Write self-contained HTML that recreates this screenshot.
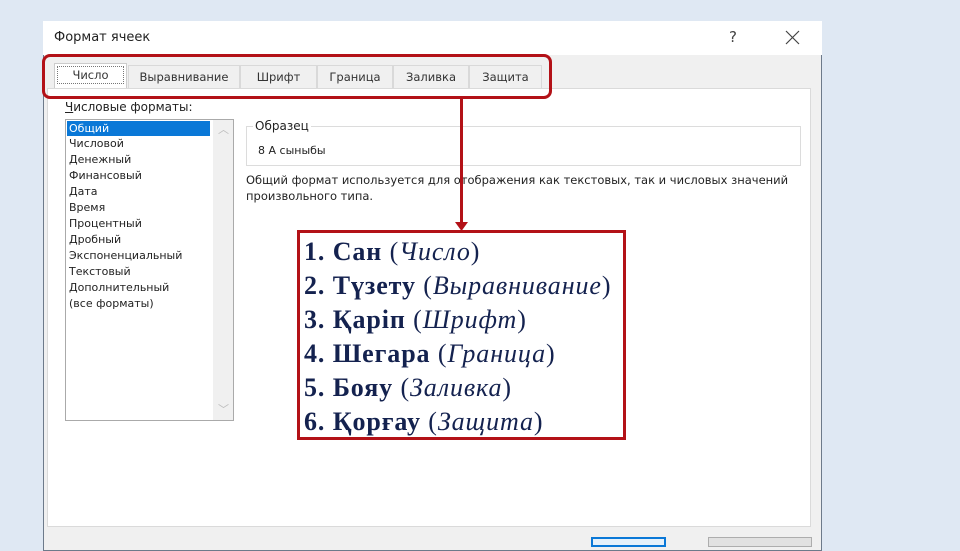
<!DOCTYPE html>
<html><head><meta charset="utf-8"><style>
*{margin:0;padding:0;box-sizing:border-box}
body{width:960px;height:540px;background:#dfe8f3;position:relative;overflow:hidden;font-family:"Segoe UI","DejaVu Sans","Liberation Sans",sans-serif;font-size:11px;color:#222}
.a{position:absolute}
.dlg{left:43px;top:21px;width:779px;height:530px;background:#f0f0f0;border:1px solid #6d7a8a;border-top:none}
.tt{left:43px;top:21px;width:779px;height:34px;background:#fff}
.tab{top:65px;height:23px;background:#f0f0f0;border:1px solid #d9d9d9;border-bottom:none;font-size:11.5px;text-align:center;line-height:22px;color:#333}
.panel{left:47px;top:88px;width:764px;height:439px;background:#fff;border:1px solid #dadada}
.li{left:69px;font-size:11px;line-height:16px;color:#222}
.sel{left:67px;top:121px;width:143px;height:15px;background:#0a78d7;color:#fff;padding-left:2px;line-height:15px}
.nb{font-family:"Liberation Serif",serif;font-size:26px;letter-spacing:0.9px;line-height:34px;color:#14224f;white-space:nowrap}
.nb b{font-weight:bold}
</style></head><body>
<div class="a dlg"></div>
<div class="a tt"></div>
<div class="a" style="left:54px;top:30px;font-size:13px;color:#222">Формат ячеек</div>
<div class="a" style="left:729px;top:28px;font-size:15px;color:#444">?</div>
<svg class="a" style="left:785px;top:30px" width="15" height="15"><path d="M1 1L14 14M14 1L1 14" stroke="#444" stroke-width="1.2"/></svg>
<div class="a panel"></div>
<div class="a tab" style="left:54px;width:73px;background:#fff;height:25px;top:63px;border-color:#ccc"><span style="border:1px dotted #777;padding:1px 14px">Число</span></div>
<div class="a tab" style="left:128px;width:112px">Выравнивание</div>
<div class="a tab" style="left:240px;width:77px">Шрифт</div>
<div class="a tab" style="left:317px;width:76px">Граница</div>
<div class="a tab" style="left:393px;width:76px">Заливка</div>
<div class="a tab" style="left:469px;width:73px">Защита</div>
<div class="a" style="left:42px;top:54px;width:510px;height:45px;border:3px solid #b31117;border-radius:8px"></div>
<div class="a" style="left:65px;top:100px;font-size:12px"><u>Ч</u>исловые форматы:</div>
<div class="a" style="left:65px;top:119px;width:169px;height:302px;border:1px solid #aaa;background:#fff"></div>
<div class="a" style="left:213px;top:120px;width:20px;height:300px;background:#f0f0f0"></div>
<div class="a" style="left:218px;top:121px;color:#bbb;font-size:11px">︿</div>
<div class="a" style="left:218px;top:401px;color:#bbb;font-size:11px">﹀</div>
<div class="a sel">Общий</div>
<div class="a li" style="top:136px">Числовой<br>Денежный<br>Финансовый<br>Дата<br>Время<br>Процентный<br>Дробный<br>Экспоненциальный<br>Текстовый<br>Дополнительный<br>(все форматы)</div>
<div class="a" style="left:246px;top:126px;width:555px;height:40px;border:1px solid #dcdcdc"></div>
<div class="a" style="left:253px;top:119px;background:#fff;padding:0 2px;font-size:12px">Образец</div>
<div class="a" style="left:258px;top:144px;font-size:11px">8 А сыныбы</div>
<div class="a" style="left:246px;top:172px;font-size:11.5px;line-height:16px">Общий формат используется для отображения как текстовых, так и числовых значений<br>произвольного типа.</div>
<div class="a" style="left:460px;top:97px;width:3px;height:128px;background:#b31117"></div>
<svg class="a" style="left:455px;top:222px" width="13" height="9"><path d="M0 0H13L6.5 9Z" fill="#b31117"/></svg>
<div class="a" style="left:297px;top:230px;width:329px;height:210px;border:3px solid #b31117;background:#fff"></div>
<div class="a nb" style="left:304px;top:235px">
<b>1. Сан</b> (<i>Число</i>)<br>
<b>2. Түзету</b> (<i>Выравнивание</i>)<br>
<b>3. Қаріп</b> (<i>Шрифт</i>)<br>
<b>4. Шегара</b> (<i>Граница</i>)<br>
<b>5. Бояу</b> (<i>Заливка</i>)<br>
<b>6. Қорғау</b> (<i>Защита</i>)</div>
<div class="a" style="left:591px;top:537px;width:75px;height:10px;border:2px solid #0a78d7;background:#e5f1fb"></div>
<div class="a" style="left:708px;top:537px;width:104px;height:10px;border:1px solid #adadad;background:#e1e1e1"></div>
</body></html>
